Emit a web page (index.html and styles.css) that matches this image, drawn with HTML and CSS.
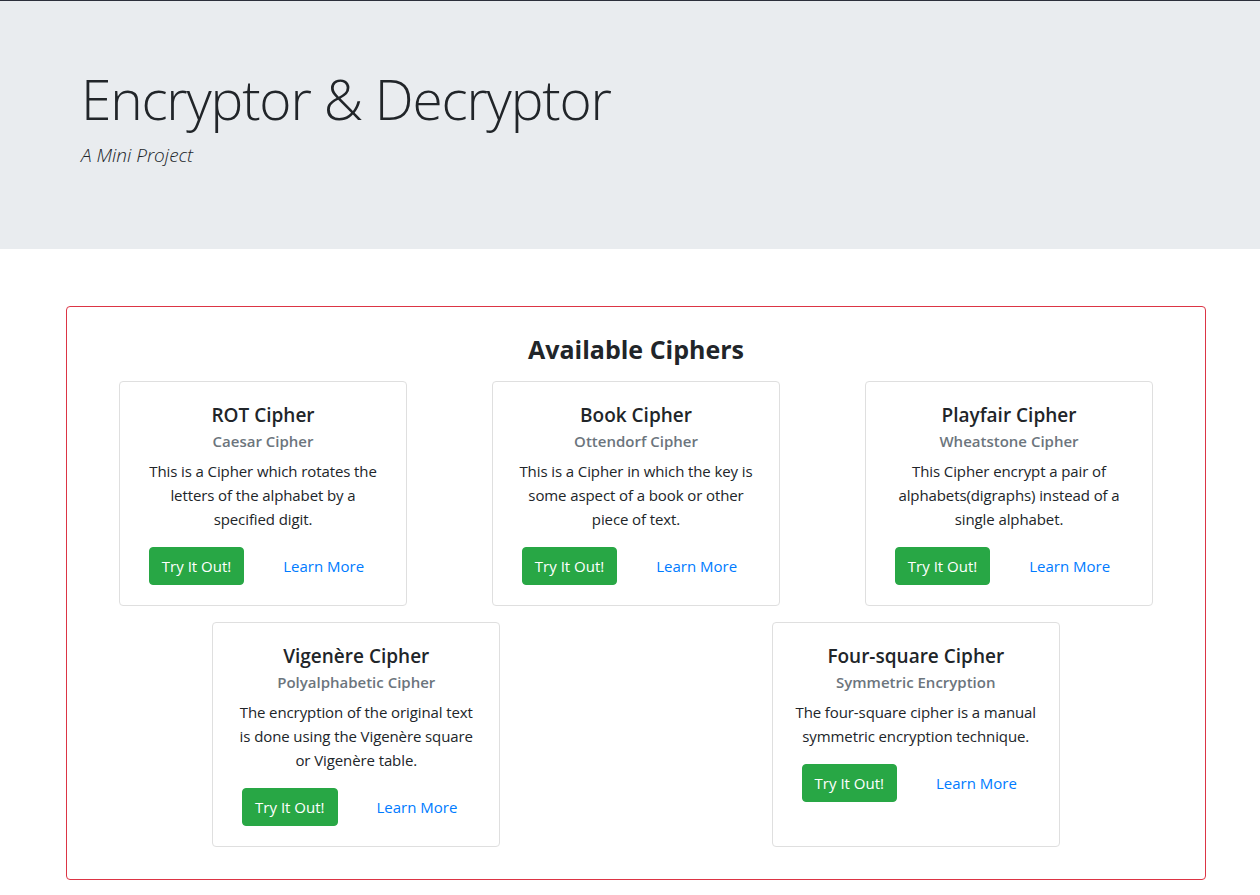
FILE: index.html
```html
<!DOCTYPE html>
<html lang="en">
<head>
<meta charset="utf-8">
<title>Encryptor &amp; Decryptor</title>
<link rel="stylesheet" href="styles.css">
</head>
<body>
<div class="topline"></div>
<header class="jumbotron">
  <div class="container">
    <h1 class="display">Encryptor &amp; Decryptor</h1>
    <p class="lead">A Mini Project</p>
  </div>
</header>
<main class="container">
  <section class="panel">
    <h2 class="panel-title">Available Ciphers</h2>
    <div class="row row-3">
      <div class="col">
        <div class="card">
          <h5 class="card-title">ROT Cipher</h5>
          <h6 class="card-subtitle">Caesar Cipher</h6>
          <p class="card-text">This is a Cipher which rotates the letters of the alphabet by a specified digit.</p>
          <div class="actions"><a class="btn btn-success" href="#">Try It Out!</a><a class="btn btn-link" href="#">Learn More</a></div>
        </div>
      </div>
      <div class="col">
        <div class="card">
          <h5 class="card-title">Book Cipher</h5>
          <h6 class="card-subtitle">Ottendorf Cipher</h6>
          <p class="card-text">This is a Cipher in which the key is some aspect of a book or other piece of text.</p>
          <div class="actions"><a class="btn btn-success" href="#">Try It Out!</a><a class="btn btn-link" href="#">Learn More</a></div>
        </div>
      </div>
      <div class="col">
        <div class="card">
          <h5 class="card-title">Playfair Cipher</h5>
          <h6 class="card-subtitle">Wheatstone Cipher</h6>
          <p class="card-text">This Cipher encrypt a pair of alphabets(digraphs) instead of a single alphabet.</p>
          <div class="actions"><a class="btn btn-success" href="#">Try It Out!</a><a class="btn btn-link" href="#">Learn More</a></div>
        </div>
      </div>
    </div>
    <div class="row row-2">
      <div class="col">
        <div class="card">
          <h5 class="card-title">Vigenère Cipher</h5>
          <h6 class="card-subtitle">Polyalphabetic Cipher</h6>
          <p class="card-text">The encryption of the original text is done using the Vigenère square or Vigenère table.</p>
          <div class="actions"><a class="btn btn-success" href="#">Try It Out!</a><a class="btn btn-link" href="#">Learn More</a></div>
        </div>
      </div>
      <div class="col">
        <div class="card">
          <h5 class="card-title">Four-square Cipher</h5>
          <h6 class="card-subtitle">Symmetric Encryption</h6>
          <p class="card-text">The four-square cipher is a manual symmetric encryption technique.</p>
          <div class="actions"><a class="btn btn-success" href="#">Try It Out!</a><a class="btn btn-link" href="#">Learn More</a></div>
        </div>
      </div>
    </div>
  </section>
</main>
</body>
</html>
```
FILE: styles.css
```css
* { box-sizing: border-box; }

body {
  margin: 0;
  font-family: "Open Sans", "Noto Sans", sans-serif;
  font-size: 15px;
  line-height: 24px;
  color: #212529;
  background: #fff;
}

.topline {
  height: 1px;
  background: #2c2f3b;
}

.container {
  width: 1140px;
  margin-left: 66px;
}

.jumbotron {
  background: #e9ecef;
  padding: 64px 0;
}

.jumbotron .container {
  padding: 0 15px;
}

.display {
  margin: 0 0 8px;
  font-size: 55px;
  font-weight: 300;
  line-height: 67px;
  letter-spacing: -1.2px;
}

.lead {
  margin: 0 0 15px;
  font-size: 19px;
  font-weight: 300;
  font-style: italic;
  line-height: 30px;
}

.panel {
  margin-top: 57px;
  border: 1px solid #dc3545;
  border-radius: 4px;
  padding: 27px 9.5px 32px;
}

.panel-title {
  margin: 0 0 17px;
  text-align: center;
  font-size: 25px;
  font-weight: 700;
  line-height: 30px;
}

.row {
  display: grid;
}

.row-3 { grid-template-columns: repeat(3, 1fr); }
.row-2 { grid-template-columns: repeat(2, 1fr); margin-top: 16px; }

.col {
  display: flex;
  justify-content: center;
}

.card {
  width: 288px;
  border: 1px solid #dfdfdf;
  border-radius: 4px;
  padding: 21px 20px 20px;
  text-align: center;
}

.card-title {
  margin: 0 0 5px;
  font-size: 19px;
  font-weight: 600;
  line-height: 24px;
}

.card-subtitle {
  margin: 0 0 8px;
  font-size: 15px;
  font-weight: 600;
  line-height: 19px;
  color: #6c757d;
}

.card-text {
  margin: 0 0 16px;
  letter-spacing: -0.1px;
}

.actions {
  display: flex;
  justify-content: center;
  gap: 26px;
}

.btn {
  display: inline-block;
  padding: 6px 12px;
  border: 1px solid transparent;
  border-radius: 4px;
  line-height: 24px;
  font-size: 15px;
  text-decoration: none;
}

.btn-success {
  background: #28a745;
  border-color: #28a745;
  color: #fff;
}

.btn-link {
  color: #007bff;
}
```
